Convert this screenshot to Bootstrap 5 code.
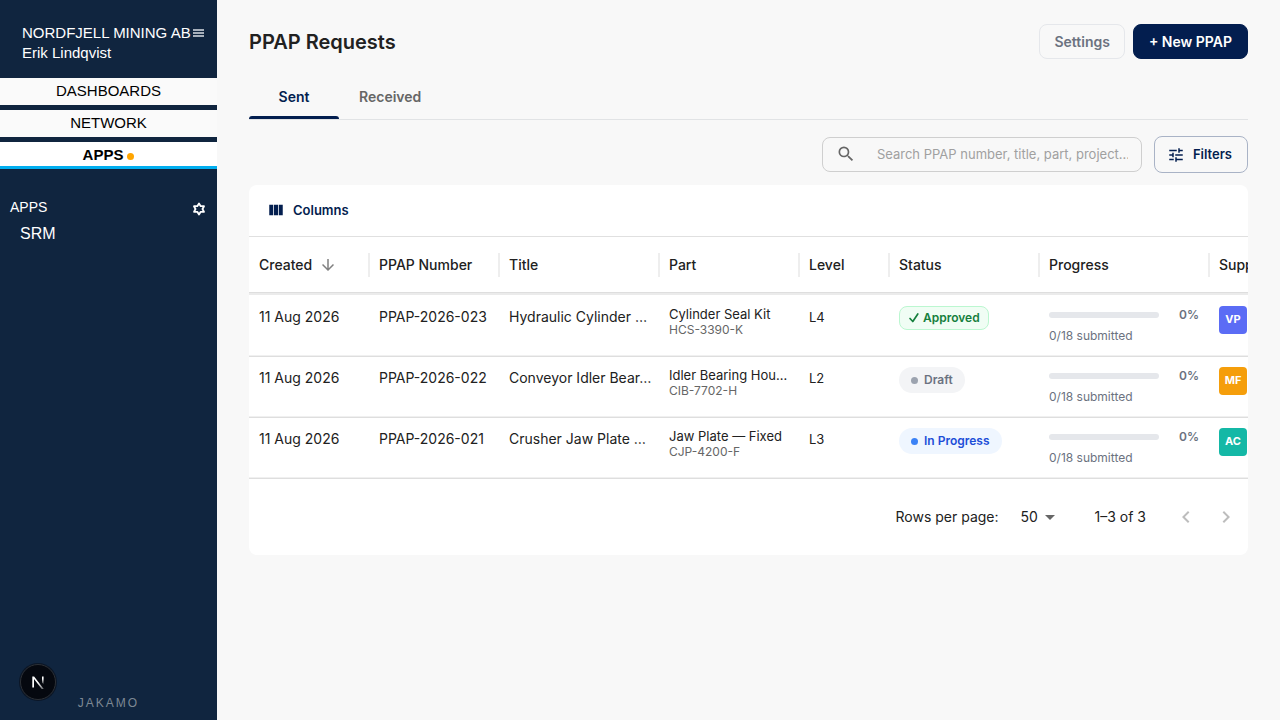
<!DOCTYPE html>
<html lang="en">
<head>
<meta charset="utf-8">
<meta name="viewport" content="width=device-width, initial-scale=1">
<title>PPAP Requests</title>
<link href="https://cdn.jsdelivr.net/npm/bootstrap@5.3.0/dist/css/bootstrap.min.css" rel="stylesheet">
<style>
  :root { --navy: #031e4f; --side: #10253f; --muted: #6b7280; }
  body { font-family: Inter, "Liberation Sans", sans-serif; font-size: 14px; line-height: 22px; color: #212121; background: #f8f8f8; }
  svg { display: block; fill: currentColor; flex: none; }

  /* Sidebar */
  .side { width: 217px; flex: none; background: var(--side); color: #fff; font-family: "Liberation Sans", Arial, sans-serif; font-size: 15px; line-height: 20px; }
  .side-head { padding: 23px 12px 0 22px; height: 78px; }
  .side-menu { color: #a7b0bb; margin-top: 5px; }
  .side-links { gap: 5px; }
  .side-links a { height: 27px; line-height: 26px; font-size: 15px; background: #fafafa; color: #000; text-align: center; text-decoration: none; }
  .side-links a.current { background: #fff; border-bottom: 3px solid #00aeef; font-weight: 700; padding-top: 2px; }
  .news-dot { width: 7px; height: 7px; background: #ffa500; margin: 3px 0 0 4px; }
  .side-apps { padding: 28px 12px 0 10px; }
  .side-apps span { font-size: 14px; }
  .side-apps button { margin-top: 4px; }
  .side-apps a { font-size: 16px; line-height: 34px; margin-left: 10px; }
  .side-brand { font-size: 12px; letter-spacing: 2px; color: #7d8894; line-height: 16px; padding-bottom: 9px; }
  .dev-badge { left: 20px; bottom: 20px; width: 36px; height: 36px; background: #05080f; border: 1px solid #2c3036; color: #fff; box-shadow: 0 0 0 1px #0b1626; }

  /* Page header */
  .page { padding: 24px 32px; min-width: 0; }
  .page h1 { font-size: 20px; line-height: 28px; font-weight: 600; }
  .page .btn { font-size: 14px; font-weight: 600; line-height: 21px; padding: 6px 14px; border-radius: 8px; }
  .btn-plain { color: var(--muted); border-color: #e5e7eb; }
  .page .btn-navy { color: #fff; background: var(--navy); border-color: var(--navy); padding: 6px 15px; }
  .tab-bar { margin-top: 16px; border-bottom: 1px solid #e1e3e5; }
  .tab-bar button { height: 44px; min-width: 90px; padding: 0 20px; border: 0; background: none; color: #666; font-weight: 600; }
  .tab-bar button.active { color: var(--navy); box-shadow: none; position: relative; }
  .tab-bar button.active::after { content: ""; position: absolute; inset: auto 0 0 0; height: 3px; background: var(--navy); border-radius: 3px 3px 0 0; }

  /* Search and filters */
  .tools { margin: 16px 0 12px; gap: 12px; }
  .search-box { width: 320px; height: 35px; border: 1px solid #cfcfcf; border-radius: 8px; padding: 0 13px 1px; gap: 21px; color: #666; }
  .search-box input { border: 0; background: none; outline: 0; padding: 0; font-size: 13px; min-width: 0; color: #212121; }
  .search-box input::placeholder { color: #a0a0a0; opacity: 1; }
  .page .btn-filter { color: var(--navy); border-color: #a9b3c6; font-size: 13px; padding: 7px 15px 7px 12px; gap: 8px; }

  /* Table card */
  .sheet { background: #fff; border-radius: 8px; overflow: hidden; }
  .sheet-top { height: 52px; padding: 0 18px 1px; border-bottom: 1px solid #e0e0e0; }
  .btn-cols { border: 0; background: none; padding: 0; gap: 8px; color: var(--navy); font-size: 13px; font-weight: 600; }
  .sheet-scroll { overflow-x: auto; scrollbar-width: none; }
  .sheet-scroll::-webkit-scrollbar { display: none; }
  .grid-table { width: 1140px; table-layout: fixed; border-collapse: separate; border-spacing: 0; }
  .grid-table th { height: 56px; padding: 0 0 0 10px; font-weight: 500; vertical-align: middle; border-bottom: 1px solid #dedede; }
  .grid-table th > div { height: 24px; gap: 7px; margin-right: -1px; border-right: 2px solid #eee; }
  .grid-table td { height: 61px; padding: 10px 10px 0; vertical-align: top; white-space: nowrap; border-bottom: 1px solid #dedede; box-shadow: inset 0 -1px #f0f0f0; }
  .grid-table tbody tr:first-child td { height: 64px; padding-top: 11px; border-top: 2px solid #ebebeb; }
  .grid-table .fs-13 { font-size: 13px; }
  .part-name { font-size: 13px; line-height: 16px; }
  .part-code { font-size: 12px; line-height: 16px; color: #666; }
  .pill { display: inline-flex; align-items: center; height: 26px; padding: 0 12px; gap: 6px; border-radius: 13px; font-size: 12px; font-weight: 600; }
  .pill i { width: 7px; height: 7px; border-radius: 50%; background: currentColor; }
  .pill-draft { background: #f3f4f6; color: var(--muted); }
  .pill-draft i { background: #9ca3af; }
  .pill-doing { background: #eff6ff; color: #1d4ed8; }
  .pill-doing i { background: #3b82f6; }
  .pill-ok { height: 24px; padding: 0 8px; gap: 3px; border: 1px solid #bbf7d0; border-radius: 8px; background: #f0fdf4; color: #15803d; }
  .meter { gap: 20px; line-height: 18px; font-size: 12px; font-weight: 600; color: var(--muted); }
  .meter .progress { width: 110px; height: 6px; background: #e5e7eb; border-radius: 3px; }
  .meter-note { font-size: 12px; line-height: 16px; color: var(--muted); margin-top: 4px; }
  .avatar { width: 28px; height: 28px; border-radius: 4px; color: #fff; font-size: 11px; font-weight: 700; padding-bottom: 2px; }
  .av-indigo { background: #5b6cf5; } .av-amber { background: #f59e0b; } .av-teal { background: #14b8a6; }

  /* Pager */
  .pager { height: 76px; padding-right: 2px; }
  .pager select { appearance: none; border: 0; background: none; width: 41px; padding: 0; margin: 0 33px 0 22px; color: inherit; }
  .select-wrap svg { right: 33px; top: 50%; margin-top: -12px; color: #666; pointer-events: none; }
  .pager button { border: 0; background: none; padding: 8px; color: #bdbdbd; }
</style>
</head>
<body>
<div class="d-flex min-vh-100">
  <aside class="side d-flex flex-column">
    <div class="side-head d-flex justify-content-between">
      <div class="text-nowrap">NORDFJELL MINING AB<br>Erik Lindqvist</div>
      <button class="side-menu border-0 bg-transparent p-0 align-self-start" aria-label="Menu"><svg width="12" height="10" viewBox="0 0 12 10"><path d="M0 1h11v2H0zM0 4h11v2H0zM0 7h11v2H0z"/></svg></button>
    </div>
    <nav class="side-links d-flex flex-column">
      <a href="#">DASHBOARDS</a>
      <a href="#">NETWORK</a>
      <a href="#" class="current d-flex justify-content-center align-items-center">APPS<span class="news-dot rounded-circle"></span></a>
    </nav>
    <div class="side-apps">
      <div class="d-flex justify-content-between align-items-center">
        <span>APPS</span>
        <button class="border-0 bg-transparent p-0 text-white" aria-label="App settings"><svg width="12" height="14" viewBox="0 0 12 14"><path d="M6 1.500L7.700 4.200L11 4.200L9.500 7L11 9.800L7.700 9.800L6 12.500L4.300 9.800L1 9.800L2.500 7L1 4.200L4.300 4.200z" fill="none" stroke="currentColor" stroke-width="1.800" stroke-linejoin="round"/></svg></button>
      </div>
      <a href="#" class="text-white text-decoration-none">SRM</a>
    </div>
    <div class="side-brand mt-auto text-center">JAKAMO</div>
  </aside>

  <main class="page flex-grow-1">
    <header class="d-flex align-items-center gap-2">
      <h1 class="mb-0 me-auto">PPAP Requests</h1>
      <button class="btn btn-plain">Settings</button>
      <button class="btn btn-navy">+ New PPAP</button>
    </header>

    <div class="tab-bar d-flex" role="tablist">
      <button class="active" role="tab" aria-selected="true">Sent</button>
      <button role="tab" aria-selected="false">Received</button>
    </div>

    <div class="tools d-flex justify-content-end align-items-center">
      <label class="search-box d-flex align-items-center">
        <svg width="20" height="20" viewBox="0 0 24 24"><path d="M15.500 14h-.79l-.28-.27A6.471 6.471 0 0 0 16 9.500 6.500 6.500 0 1 0 9.500 16c1.610 0 3.090-.59 4.230-1.570l.27.28v.79l5 4.990L20.490 19l-4.990-5zm-6 0C7.010 14 5 11.990 5 9.500S7.010 5 9.500 5 14 7.010 14 9.500 11.990 14 9.500 14z"/></svg>
        <input class="flex-grow-1" type="text" aria-label="Search" placeholder="Search PPAP number, title, part, project...">
      </label>
      <button class="btn btn-filter d-flex align-items-center">
        <svg width="18" height="18" viewBox="0 0 24 24"><path d="M3 17v2h6v-2H3zM3 5v2h10V5H3zm10 16v-2h8v-2h-8v-2h-2v6h2zM7 9v2H3v2h4v2h2V9H7zm14 4v-2H11v2h10zm-6-4h2V7h4V5h-4V3h-2v6z"/></svg>Filters
      </button>
    </div>

    <section class="sheet">
      <div class="sheet-top d-flex align-items-center">
        <button class="btn-cols d-flex align-items-center"><svg width="18" height="18" viewBox="0 0 24 24"><path d="M14.670 5v14H9.330V5h5.340zm1 14H21V5h-5.330v14zm-7.340 0V5H3v14h5.330z"/></svg>Columns</button>
      </div>
      <div class="sheet-scroll">
        <table class="grid-table">
          <colgroup><col width="120"><col width="130"><col width="160"><col width="140"><col width="90"><col width="150"><col width="170"><col width="180"></colgroup>
          <thead>
            <tr>
              <th scope="col"><div class="d-flex align-items-center">Created<svg width="18" height="18" viewBox="0 0 24 24" color="#808080"><path d="M20 12l-1.410-1.410L13 16.170V4h-2v12.170l-5.580-5.590L4 12l8 8 8-8z"/></svg></div></th>
              <th scope="col"><div class="d-flex align-items-center">PPAP Number</div></th>
              <th scope="col"><div class="d-flex align-items-center">Title</div></th>
              <th scope="col"><div class="d-flex align-items-center">Part</div></th>
              <th scope="col"><div class="d-flex align-items-center">Level</div></th>
              <th scope="col"><div class="d-flex align-items-center">Status</div></th>
              <th scope="col"><div class="d-flex align-items-center">Progress</div></th>
              <th scope="col"><div class="d-flex align-items-center">Supplier</div></th>
            </tr>
          </thead>
          <tbody>
            <tr>
              <td>11 Aug 2026</td><td>PPAP-2026-023</td><td>Hydraulic Cylinder …</td>
              <td><div class="part-name">Cylinder Seal Kit</div><div class="part-code">HCS-3390-K</div></td>
              <td class="fs-13">L4</td>
              <td><span class="pill pill-ok"><svg width="12" height="12" viewBox="0 0 12 12"><path d="M2 6.500l2.800 3L9.800 2" fill="none" stroke="currentColor" stroke-width="1.700" stroke-linecap="round" stroke-linejoin="round"/></svg>Approved</span></td>
              <td><div class="meter d-flex align-items-center"><div class="progress" role="progressbar" aria-label="Submitted" aria-valuenow="0" aria-valuemin="0" aria-valuemax="18"></div>0%</div><div class="meter-note">0/18 submitted</div></td>
              <td><div class="avatar av-indigo d-flex align-items-center justify-content-center">VP</div></td>
            </tr>
            <tr>
              <td>11 Aug 2026</td><td>PPAP-2026-022</td><td>Conveyor Idler Bear…</td>
              <td><div class="part-name">Idler Bearing Hou…</div><div class="part-code">CIB-7702-H</div></td>
              <td class="fs-13">L2</td>
              <td><span class="pill pill-draft"><i></i>Draft</span></td>
              <td><div class="meter d-flex align-items-center"><div class="progress" role="progressbar" aria-label="Submitted" aria-valuenow="0" aria-valuemin="0" aria-valuemax="18"></div>0%</div><div class="meter-note">0/18 submitted</div></td>
              <td><div class="avatar av-amber d-flex align-items-center justify-content-center">MF</div></td>
            </tr>
            <tr>
              <td>11 Aug 2026</td><td>PPAP-2026-021</td><td>Crusher Jaw Plate …</td>
              <td><div class="part-name">Jaw Plate — Fixed</div><div class="part-code">CJP-4200-F</div></td>
              <td class="fs-13">L3</td>
              <td><span class="pill pill-doing"><i></i>In Progress</span></td>
              <td><div class="meter d-flex align-items-center"><div class="progress" role="progressbar" aria-label="Submitted" aria-valuenow="0" aria-valuemin="0" aria-valuemax="18"></div>0%</div><div class="meter-note">0/18 submitted</div></td>
              <td><div class="avatar av-teal d-flex align-items-center justify-content-center">AC</div></td>
            </tr>
          </tbody>
        </table>
      </div>
      <div class="pager d-flex align-items-center justify-content-end">
        <label for="page-size">Rows per page:</label>
        <span class="select-wrap position-relative">
          <select id="page-size"><option>50</option><option>100</option></select>
          <svg class="position-absolute" width="24" height="24" viewBox="0 0 24 24"><path d="M7 10l5 5 5-5z"/></svg>
        </span>
        <span class="me-3">1–3 of 3</span>
        <button class="ms-1" disabled aria-label="Previous page"><svg width="24" height="24" viewBox="0 0 24 24"><path d="M15.410 7.410L14 6l-6 6 6 6 1.410-1.410L10.830 12z"/></svg></button>
        <button disabled aria-label="Next page"><svg width="24" height="24" viewBox="0 0 24 24"><path d="M10 6L8.590 7.410 13.170 12l-4.580 4.590L10 18l6-6z"/></svg></button>
      </div>
    </section>
  </main>
</div>

<button class="dev-badge position-fixed rounded-circle p-0 d-flex align-items-center justify-content-center" aria-label="Developer tools">
  <svg width="14" height="14" viewBox="0 0 14 14">
    <defs>
      <linearGradient id="fade-a" x1="0" y1="0" x2="0" y2="1"><stop offset="0.300" stop-color="#fff"/><stop offset="1" stop-color="#fff" stop-opacity="0.100"/></linearGradient>
      <linearGradient id="fade-b" x1="0" y1="0" x2="1" y2="1"><stop offset="0.500" stop-color="#fff"/><stop offset="1" stop-color="#fff" stop-opacity="0.300"/></linearGradient>
    </defs>
    <path d="M1.300 12.500V1.500h1.800L12.800 14l-1.400.8L3 4v8.500z" fill="url(#fade-b)"/>
    <path d="M11 1.500h1.600v8l-1.600-2z" fill="url(#fade-a)"/>
  </svg>
</button>
<script src="https://cdn.jsdelivr.net/npm/bootstrap@5.3.0/dist/js/bootstrap.bundle.min.js"></script>
</body>
</html>
